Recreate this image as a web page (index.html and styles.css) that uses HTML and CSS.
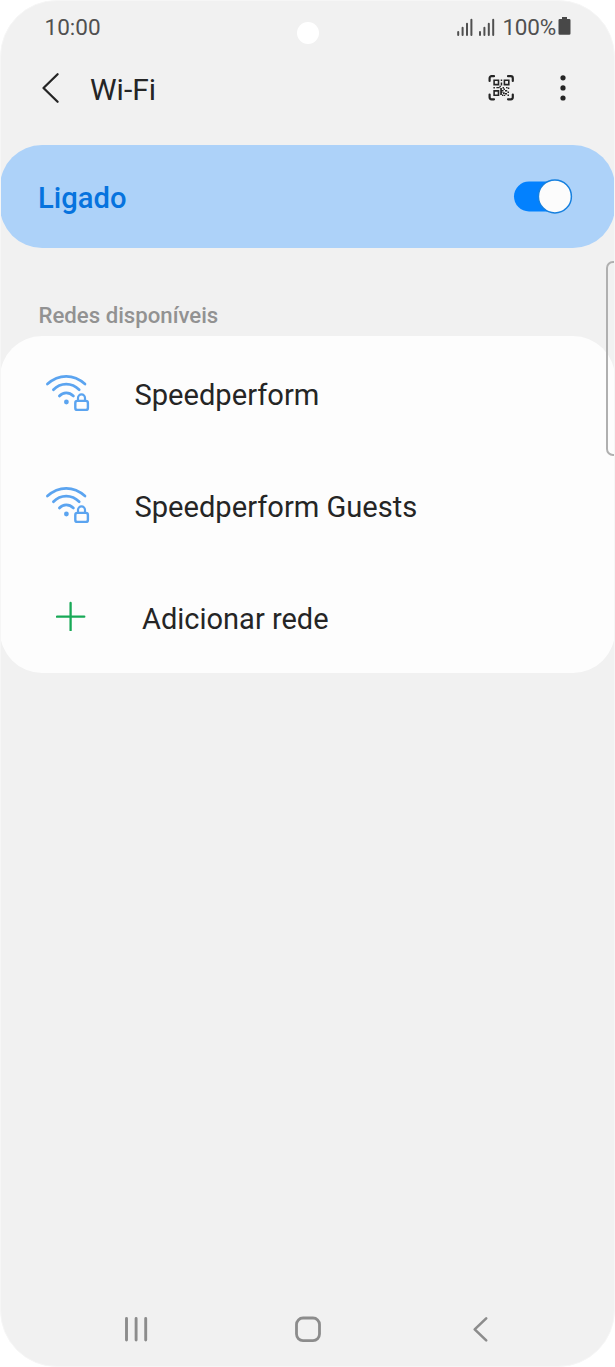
FILE: index.html
```html
<!DOCTYPE html>
<html lang="pt">
<head>
<meta charset="utf-8">
<title>Wi-Fi</title>
<link rel="stylesheet" href="styles.css">
</head>
<body>
<svg class="defs" width="0" height="0">
  <symbol id="wifi-lock" viewBox="0 0 46 40">
    <g fill="none" stroke="#5ba4f0" stroke-width="2.7" stroke-linecap="round">
      <path d="M3.400 12Q12 4.300 22.200 4.300T41 12"/>
      <path d="M9.400 17.800Q14.700 12.200 22.200 12.200T35.200 17.800"/>
      <path d="M15.400 24Q18.200 20.900 22.200 20.900T29.400 24"/>
      <rect x="31.300" y="28.900" width="12.600" height="9" rx="2" stroke-width="2.400"/>
      <path d="M34 28.500V26a3.500 3.700 0 0 1 7 0v2.500" stroke-width="2.200"/>
    </g>
    <circle cx="22.400" cy="30" r="2.400" fill="#5ba4f0"/>
  </symbol>
</svg>
<div class="phone">
  <header class="status">
    <span class="time">10:00</span>
    <div class="indicators">
      <svg class="signal" width="38" height="18" viewBox="0 0 38 18">
        <path d="M1.200 14v3M5.600 9.800V17M10 5.800V17M14.400 1.700V17M23 14v3M27.400 9.800V17M31.800 5.800V17M36.200 1.700V17" stroke="#505050" stroke-width="2" stroke-linecap="round"/>
      </svg>
      <span class="percent">100%</span>
      <svg class="battery" width="13" height="18" viewBox="0 0 13 18">
        <path d="M4 0h5v2h2.200q1.300 0 1.300 1.300v13.200q0 1.300-1.300 1.300H1.800Q.5 17.800.5 16.500V3.300Q.5 2 1.800 2H4z" fill="#484848"/>
      </svg>
    </div>
    <i class="camera"></i>
  </header>

  <div class="titlebar">
    <svg class="back" width="20" height="32" viewBox="0 0 20 32"><path d="M17.600 2.300 3.500 16l14.100 13.700" fill="none" stroke="#252525" stroke-width="2.300" stroke-linecap="round" stroke-linejoin="round"/></svg>
    <h1>Wi-Fi</h1>
    <svg class="qr" width="26" height="26" viewBox="0 0 26 26">
      <g fill="none" stroke="#252525">
        <path d="M1.600 6V3.200a2 2 0 0 1 2-2H6M20 1.200h2.800a2 2 0 0 1 2 2V6M24.800 19.500v2.800a2 2 0 0 1-2 2H20M6 24.300H3.600a2 2 0 0 1-2-2v-2.800" stroke-width="2.200" stroke-linecap="round"/>
        <path d="M6.100 5.200h4.400v4.400H6.100zM16.400 5.200h4.400v4.400h-4.400zM6.100 15.900h4.400v4.400H6.100z" stroke-width="1.600"/>
      </g>
      <path d="M12.700 4.500h1.500V6h-1.500zM12.700 7.500h1.500v3h-1.500zM5.400 12h1.500v1.500H5.400zM8.400 12h3.200v1.300H8.400zM11.400 10.800h1.500v1.400h-1.500zM14.500 12H16v1.500h-1.500zM18 12h1.500v1.200H18zM19.800 12.500h1.500V14h-1.500zM12.200 13h1.700v7h-1.700zM13.500 15h2v1.500h-2zM15.500 13.500H17V15h-1.500zM17 15h2.200v1.500H17zM15 17.200h1.700v1.700H15zM19.500 16.500H21V18h-1.500zM17 18h2v1.500h-2zM14 19.500h1.500V21H14zM16 19.800h1.200V21H16zM19.500 19.500H21V21h-1.500zM13.500 17h1v1h-1z" fill="#252525"/>
    </svg>
    <svg class="more" width="6" height="28" viewBox="0 0 6 28"><g fill="#252525"><circle cx="3" cy="3.800" r="2.600"/><circle cx="3" cy="13.900" r="2.600"/><circle cx="3" cy="24" r="2.600"/></g></svg>
  </div>

  <section class="switchbar">
    <span class="on">Ligado</span>
    <svg width="60" height="36" viewBox="0 0 60 36">
      <rect x="1" y="2.500" width="52" height="30" rx="15" fill="#0381fe"/>
      <circle cx="41.900" cy="17.400" r="16.500" fill="#fcfcfc" stroke="#1680df" stroke-width="1.500"/>
    </svg>
  </section>

  <h2>Redes disponíveis</h2>

  <ul class="networks">
    <li><svg class="wifi" width="46" height="40"><use href="#wifi-lock"/></svg><span>Speedperform</span></li>
    <li><svg class="wifi" width="46" height="40"><use href="#wifi-lock"/></svg><span>Speedperform Guests</span></li>
    <li class="add"><svg class="plus" width="30" height="30" viewBox="0 0 30 30"><path d="M14.600 1.900v27.400M.9 15.700h27.400" stroke="#18a957" stroke-width="2.300" stroke-linecap="round"/></svg><span>Adicionar rede</span></li>
  </ul>

  <nav class="navbar">
    <svg width="26" height="28" viewBox="0 0 26 28"><path d="M3.500 3.500V25M13.100 3.500V25M22.700 3.500V25" stroke="#8c8c8c" stroke-width="2.900" stroke-linecap="round"/></svg>
    <svg class="home" width="28" height="28" viewBox="0 0 28 28"><rect x="2.500" y="3" width="23" height="22.600" rx="6.500" fill="none" stroke="#8c8c8c" stroke-width="2.800"/></svg>
    <svg width="18" height="28" viewBox="0 0 18 28"><path d="M15.200 3.400 3.700 14.400l11.500 11" fill="none" stroke="#8c8c8c" stroke-width="2.600" stroke-linecap="round" stroke-linejoin="round"/></svg>
  </nav>
  <i class="edge-handle"></i>
</div>
</body>
</html>
```
FILE: styles.css
```css
* { box-sizing: border-box; }
body {
  margin: 0;
  background: #fff;
  font-family: Roboto, "Noto Sans", sans-serif;
  color: #252525;
}
svg { display: block; flex: none; }
.defs { position: absolute; }
h1, h2, ul { margin: 0; padding: 0; font-weight: 400; }
.phone {
  position: relative;
  display: flex;
  flex-direction: column;
  height: 1367px;
  overflow: hidden;
  background: #f1f1f1;
  border: 1px solid #f6f6f6;
  border-radius: 57px;
}
.status {
  position: relative;
  display: flex;
  justify-content: space-between;
  height: 55px;
  padding: 12px 43px 0 43.5px;
  font-size: 22.5px;
  line-height: 29px;
  color: #505050;
}
.indicators { display: flex; }
.signal { margin: 5px 7px 0 0; }
.percent { letter-spacing: -.2px; }
.battery { margin: 4px 0 0 2px; }
.camera {
  position: absolute;
  left: 296px;
  top: 21px;
  width: 22px;
  height: 22px;
  border-radius: 50%;
  background: #fff;
}
.titlebar {
  display: flex;
  align-items: center;
  height: 64px;
  padding: 0 48px 0 39px;
}
.titlebar h1 {
  flex: 1;
  margin: 3px 0 0 30px;
  font-size: 30px;
  line-height: 36px;
}
.more { margin-left: 46px; }
.switchbar {
  display: flex;
  align-items: center;
  justify-content: space-between;
  height: 103px;
  margin: 25px -1px 0;
  padding: 0 42px 0 38px;
  border-radius: 42px;
  background: #add2f9;
}
.on {
  margin-top: 2px;
  font-size: 29.2px;
  font-weight: 500;
  color: #0673de;
}
h2 {
  height: 88px;
  padding: 52px 37.5px 0;
  font-size: 22.2px;
  font-weight: 500;
  line-height: 30px;
  color: #929292;
}
.networks {
  height: 337px;
  margin: 0 -1px;
  border-radius: 42px;
  background: #fdfdfd;
  list-style: none;
}
.networks li {
  display: flex;
  align-items: center;
  height: 112px;
  padding-left: 44px;
  font-size: 29.1px;
}
.networks span { margin: 5px 0 0 44.5px; }
.networks .add { padding-left: 56px; font-size: 29px; }
.networks .add span { margin-left: 56px; }
.navbar {
  display: flex;
  align-items: center;
  justify-content: space-between;
  height: 74px;
  margin-top: auto;
  padding: 0 125px 0 122px;
}
.home { margin-right: 4px; }
.edge-handle {
  position: absolute;
  top: 260px;
  right: -12px;
  width: 20px;
  height: 195px;
  border: 2px solid #b0b0b0;
  border-radius: 7px;
}
```
